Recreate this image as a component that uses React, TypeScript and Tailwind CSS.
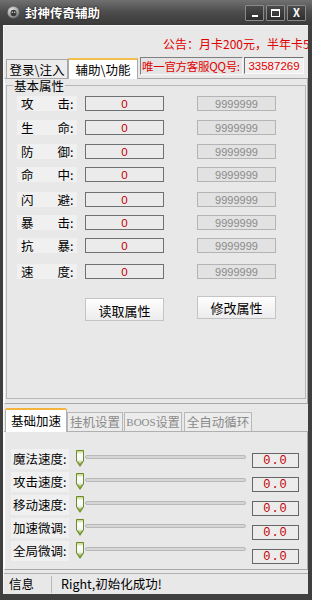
import React from "react";

const attrs: [string, string][] = [
  ["攻", "击"],
  ["生", "命"],
  ["防", "御"],
  ["命", "中"],
  ["闪", "避"],
  ["暴", "击"],
  ["抗", "暴"],
  ["速", "度"],
];
const rowMt = ["mt-[4px]", "mt-[9px]", "mt-[9px]", "mt-[8px]", "mt-[10px]", "mt-[8px]", "mt-[8px]", "mt-[11px]"];

const sliders = ["魔法速度:", "攻击速度:", "移动速度:", "加速微调:", "全局微调:"];

function Thumb() {
  return (
    <svg width="10" height="17" viewBox="0 0 10 17" className="shrink-0">
      <defs>
        <linearGradient id="tg" x1="0" y1="0" x2="0" y2="1">
          <stop offset="0" stopColor="#b8d070" />
          <stop offset="0.25" stopColor="#ffffff" />
          <stop offset="0.6" stopColor="#f4f4f4" />
          <stop offset="1" stopColor="#8aa83a" />
        </linearGradient>
      </defs>
      <path d="M1.5 0.5 H8.5 V11 L5 16.3 L1.5 11 Z" fill="url(#tg)" stroke="#6b8a2a" strokeWidth="1" />
      <path d="M2.5 11.5 L5 14.8 L7.5 11.5" fill="none" stroke="#7e9e30" strokeWidth="1.2" />
    </svg>
  );
}

function WinBtn({ children }: { children: React.ReactNode }) {
  return (
    <div className="w-[19px] h-[16px] flex items-center justify-center border border-[#8a8a8a] bg-linear-to-b from-[#4a4a4a] to-[#2e2e2e] rounded-[1px]">
      {children}
    </div>
  );
}

export default function App() {
  return (
    <div className="w-[312px] h-[600px] bg-[#3f3f3f] flex flex-col font-['Noto_Sans_CJK_SC','Noto_Sans',sans-serif] text-[12px] leading-[14px] text-black select-none">
      {/* Title bar */}
      <div className="h-[25px] flex items-center bg-linear-to-b from-[#707070] via-[#4c4c4c] to-[#3a3a3a]">
        <svg width="13" height="13" viewBox="0 0 13 13" className="ml-[7px]">
          <defs>
            <radialGradient id="ic" cx="0.4" cy="0.35" r="0.7">
              <stop offset="0" stopColor="#f0f0f0" />
              <stop offset="0.6" stopColor="#a8a8a8" />
              <stop offset="1" stopColor="#5a5a5a" />
            </radialGradient>
          </defs>
          <circle cx="6.5" cy="6.5" r="6" fill="url(#ic)" />
          <ellipse cx="6.5" cy="7" rx="3" ry="3.3" fill="#3a3a3a" />
          <circle cx="5.3" cy="6.3" r="0.8" fill="#cfcfcf" />
          <circle cx="7.7" cy="6.3" r="0.8" fill="#cfcfcf" />
        </svg>
        <span className="ml-[5px] text-white font-bold text-[12.5px] leading-[14px] [text-shadow:0_0_2px_#000]">封神传奇辅助</span>
        <div className="ml-auto mr-[6px] flex gap-[2px]">
          <WinBtn>
            <div className="w-[6px] h-[2px] bg-white mt-[6px]" />
          </WinBtn>
          <WinBtn>
            <div className="w-[9px] h-[8px] border border-white border-t-2" />
          </WinBtn>
          <WinBtn>
            <span className="text-white text-[11px] leading-[11px] font-bold">X</span>
          </WinBtn>
        </div>
      </div>

      {/* Body */}
      <div className="flex-1 ml-[3px] mr-[4px] mb-[6px] bg-[#e8e8e8] flex flex-col border-t border-l border-[#f6f6f6] overflow-hidden">
        {/* Announcement */}
        <div className="h-[32px] flex items-end pb-[7px] pl-[159px] whitespace-nowrap overflow-hidden">
          <span className="text-[#e00000] text-[12px] leading-[14px]">公告：月卡200元，半年卡500元</span>
        </div>

        {/* Tabs row */}
        <div className="h-[20px] flex items-end pl-[2px]">
          <div className="h-[19px] w-[62px] border border-b-0 border-[#a8a8a8] bg-[#ececec] flex items-center justify-center text-[12.5px] leading-[13px]">
            登录\注入
          </div>
          <div className="h-[21px] w-[70px] -mb-[1px] border-x border-[#a8a8a8] border-t-2 border-t-[#f2c04a] bg-white flex items-center justify-center text-[12.5px] leading-[13px] relative z-10">
            辅助\功能
          </div>
          <div className="self-start mt-[-1px] ml-[2px] h-[18px] w-[103px] border-t border-l border-[#808080] border-b border-r border-b-[#f8f8f8] border-r-[#f8f8f8] bg-[#e4e4e4] flex items-center pl-[1px] text-[#e00000] text-[11.5px] tracking-[-0.3px] whitespace-nowrap overflow-hidden">
            唯一官方客服QQ号:
          </div>
          <div className="self-start mt-[-1px] ml-[1px] h-[17px] w-[60px] border-t border-l border-[#707070] border-b border-r border-b-[#fafafa] border-r-[#fafafa] bg-[#f0f0f0] flex items-center justify-center text-[#e00000] font-['Liberation_Sans',sans-serif] text-[11.5px]">
            33587269
          </div>
        </div>

        {/* Main tab panel */}
        <div className="h-[326px] border-t border-[#a8a8a8] border-l border-r border-b border-l-[#ffffff] border-r-[#a8a8a8] border-b-[#a8a8a8] bg-[#e8e8e8] flex flex-col">
          <fieldset className="mx-[1px] border border-[#b8b8b8] h-[320px] px-0">
            <legend className="ml-[6px] px-[1px] text-[12.5px] leading-[13px]">基本属性</legend>
            {attrs.map(([a, b], i) => (
              <div key={i} className={`flex items-center h-[15px] ${rowMt[i]}`}>
                <div className="ml-[10px] w-[60px] h-[15px] bg-[#f0f0f0] flex items-center text-[12.5px] leading-[13px]">
                  <span className="ml-[4px]">{a}</span>
                  <span className="ml-[24px]">{b}:</span>
                </div>
                <div className="ml-[8px] w-[79px] h-[15px] border border-[#707070] bg-[#ebebeb] flex items-center justify-center text-[#c00000] font-['Liberation_Sans',sans-serif] text-[11.5px]">
                  0
                </div>
                <div className="ml-[33px] w-[79px] h-[15px] border border-[#b4b4b4] bg-[#e2e2e2] flex items-center justify-center text-[#8a8a8a] font-['Liberation_Sans',sans-serif] text-[11px]">
                  9999999
                </div>
              </div>
            ))}
            <div className="flex items-start">
              <button className="ml-[78px] mt-[19px] w-[79px] h-[23px] border border-[#c4c4c4] bg-linear-to-b from-[#fefefe] to-[#ececec] text-[13px] leading-[14px] pt-[3px]">
                读取属性
              </button>
              <button className="ml-[33px] mt-[17px] w-[79px] h-[23px] border border-[#c4c4c4] bg-linear-to-b from-[#fefefe] to-[#ececec] text-[13px] leading-[14px]">
                修改属性
              </button>
            </div>
          </fieldset>
        </div>

        {/* Bottom tabs */}
        <div className="h-[28px] flex items-end pl-[1px] border-b border-[#b0b0b0]">
          <div className="h-[24px] w-[62px] -mb-[1px] border-x border-[#b0b0b0] border-t-2 border-t-[#f4b43c] rounded-t-[2px] bg-white flex items-center justify-center text-[12.5px] relative z-10">
            基础加速
          </div>
          <div className="h-[19px] w-[56px] border border-b-0 border-[#b8b8b8] bg-[#ececec] flex items-center justify-center text-[12.5px] text-[#8a8a8a]">
            挂机设置
          </div>
          <div className="ml-[1px] h-[19px] w-[58px] border border-b-0 border-[#b8b8b8] bg-[#ececec] flex items-center justify-center text-[12px] text-[#8a8a8a]">
            <span className="font-['Liberation_Serif',serif] text-[11px]">BOOS</span>设置
          </div>
          <div className="ml-[2px] h-[19px] w-[68px] border border-b-0 border-[#b8b8b8] bg-[#ececec] flex items-center justify-center text-[12.5px] text-[#8a8a8a]">
            全自动循环
          </div>
        </div>
        <div className="h-[138px] border-l border-[#ffffff] border-r border-r-[#a8a8a8] border-b border-b-[#a8a8a8] flex">
          <div className="flex flex-col gap-[3px] pt-[17px]">
            {sliders.map((s, i) => (
              <div key={i} className="h-[20px] flex items-center">
                <div className="ml-[6px] w-[58px] h-[20px] bg-[#f0f0f0] flex items-center pl-[2px] text-[12.5px]">{s}</div>
                <div className="ml-[6px] mt-[-1px]">
                  <Thumb />
                </div>
                <div className="w-[161px] h-[4px] rounded-[2px] border border-[#b8b8b8] bg-[#d6d6d6] mt-[-4px]" />
              </div>
            ))}
          </div>
          <div className="ml-[6px] flex flex-col gap-[9px] pt-[21px]">
            {sliders.map((_, i) => (
              <div key={i} className="w-[47px] h-[15px] border border-[#666] bg-[#ececec] flex items-center justify-center text-[#c00000] font-['Liberation_Mono',monospace] text-[12px] tracking-[1px]">
                0.0
              </div>
            ))}
          </div>
        </div>

        {/* Status bar */}
        <div className="mt-[3px] flex-1 border-t border-[#b0b0b0] flex items-center text-[12.5px]">
          <span className="ml-[5px] w-[42px]">信息</span>
          <div className="w-[1px] h-[17px] bg-[#b8b8b8]" />
          <span className="ml-[9px]">Right,初始化成功!</span>
        </div>
      </div>
    </div>
  );
}
